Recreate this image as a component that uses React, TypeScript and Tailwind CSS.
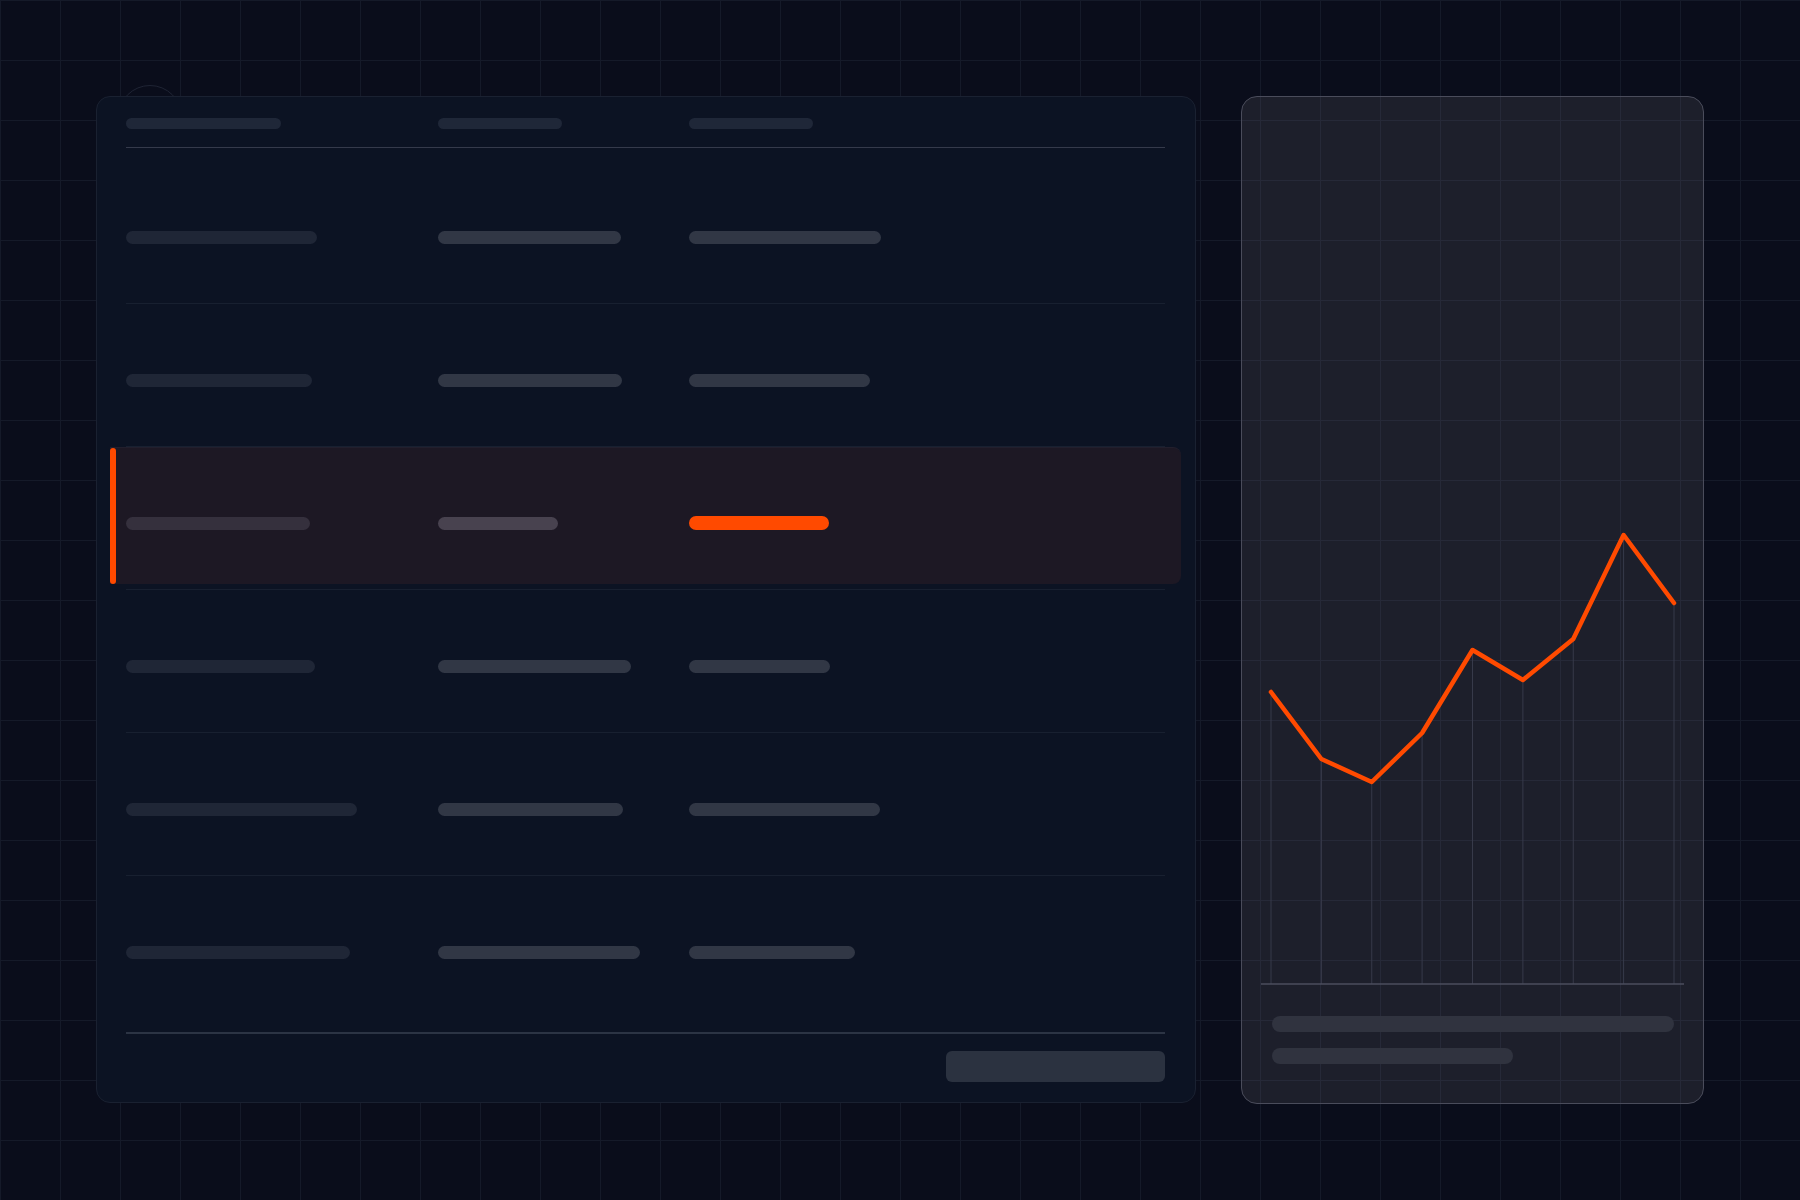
import React from 'react'

type Row = { a: number; b: number; c: number; active?: boolean }

const rows: Row[] = [
  { a: 191, b: 183, c: 192 },
  { a: 186, b: 184, c: 181 },
  { a: 184, b: 120, c: 140, active: true },
  { a: 189, b: 193, c: 141 },
  { a: 231, b: 185, c: 191 },
  { a: 224, b: 202, c: 166 },
]

// chart points in svg coordinates (baseline at y=500)
const points: [number, number][] = [
  [10, 208],
  [60.4, 275],
  [110.75, 298],
  [161.1, 249],
  [211.5, 166],
  [261.9, 196],
  [312.25, 155],
  [362.6, 51],
  [413, 119],
]

const grid =
  'bg-[linear-gradient(to_right,#151a29_1px,transparent_1px),linear-gradient(to_bottom,#151a29_1px,transparent_1px)] bg-[size:60px_60px] bg-fixed'

function TableRow({ row, last }: { row: Row; last: boolean }) {
  return (
    <div
      className={`relative grid h-[143px] grid-cols-[312px_251px_1fr] items-center pt-[10px] ${
        last ? '' : 'border-b border-[#182030]'
      }`}
    >
      {row.active && (
        <div className="absolute -left-[16px] -right-[16px] top-0 bottom-[5px] rounded-r-lg border-t border-[#221f2d] bg-[#1d1824]">
          <div className="absolute left-0 top-0 h-full w-[6px] rounded-full bg-[#ff4a00]" />
        </div>
      )}
      <div
        className={`relative h-[13px] rounded-full ${row.active ? 'bg-[#35303d]' : 'bg-[#1f2636]'}`}
        style={{ width: row.a }}
      />
      <div
        className={`relative h-[13px] rounded-full ${row.active ? 'bg-[#48424f]' : 'bg-[#313745]'}`}
        style={{ width: row.b }}
      />
      <div
        className={`relative rounded-full ${row.active ? 'h-[14px] bg-[#ff4a00]' : 'h-[13px] bg-[#313745]'}`}
        style={{ width: row.c }}
      />
    </div>
  )
}

function Chart() {
  const line = points.map(([x, y]) => `${x},${y}`).join(' ')
  return (
    <svg width="423" height="502" viewBox="0 0 423 502" className="ml-[19px] block">
      {points.map(([x, y], i) => (
        <line key={i} x1={x} y1={y} x2={x} y2={500} stroke="#373a4a" strokeWidth="1" />
      ))}
      <line x1="0" y1="500" x2="423" y2="500" stroke="#4b4e5e" strokeWidth="1.5" />
      <polyline
        points={line}
        fill="none"
        stroke="#ff4a00"
        strokeWidth="4.5"
        strokeLinejoin="round"
        strokeLinecap="round"
      />
    </svg>
  )
}

export default function App() {
  return (
    <div className={`relative flex min-h-screen w-full gap-[45px] bg-[#0a0d1b] pl-[96px] pt-[96px] ${grid}`}>
      {/* ring peeking out behind the table card */}
      <div className="absolute left-[118px] top-[85px] h-[64px] w-[64px] rounded-full border border-[#1f2434]" />

      <div className="relative flex h-[1007px] w-[1100px] flex-col rounded-[14px] border border-[#1a2131] bg-[#0c1323] pb-[20px] pl-[29px] pr-[30px] pt-[21px]">
        <div className="grid grid-cols-[312px_251px_1fr] border-b border-[#353a4b] pb-[18px]">
          <div className="h-[11px] w-[155px] rounded-full bg-[#1f2738]" />
          <div className="h-[11px] w-[124px] rounded-full bg-[#1f2738]" />
          <div className="h-[11px] w-[124px] rounded-full bg-[#1f2738]" />
        </div>

        <div className="pt-[13px]">
          {rows.map((r, i) => (
            <TableRow key={i} row={r} last={i === rows.length - 1} />
          ))}
        </div>

        <div className="mt-[13px] h-[2px] w-full bg-[#2c3444]" />
        <div className="mt-[17px] h-[31px] w-[219px] self-end rounded-md bg-[#2b3240]" />
      </div>

      <div className="flex h-[1008px] w-[463px] flex-col justify-end rounded-[16px] border border-[#4a4c5b] bg-[#1d1f2b] bg-[linear-gradient(to_right,#262938_1px,transparent_1px),linear-gradient(to_bottom,#262938_1px,transparent_1px)] bg-[size:60px_60px] bg-fixed pb-[39px]">
        <Chart />
        <div className="ml-[30px] mt-[30px] flex flex-col gap-[16px]">
          <div className="h-[16px] w-[402px] rounded-full bg-[#30333f]" />
          <div className="h-[16px] w-[241px] rounded-full bg-[#30333f]" />
        </div>
      </div>
    </div>
  )
}
